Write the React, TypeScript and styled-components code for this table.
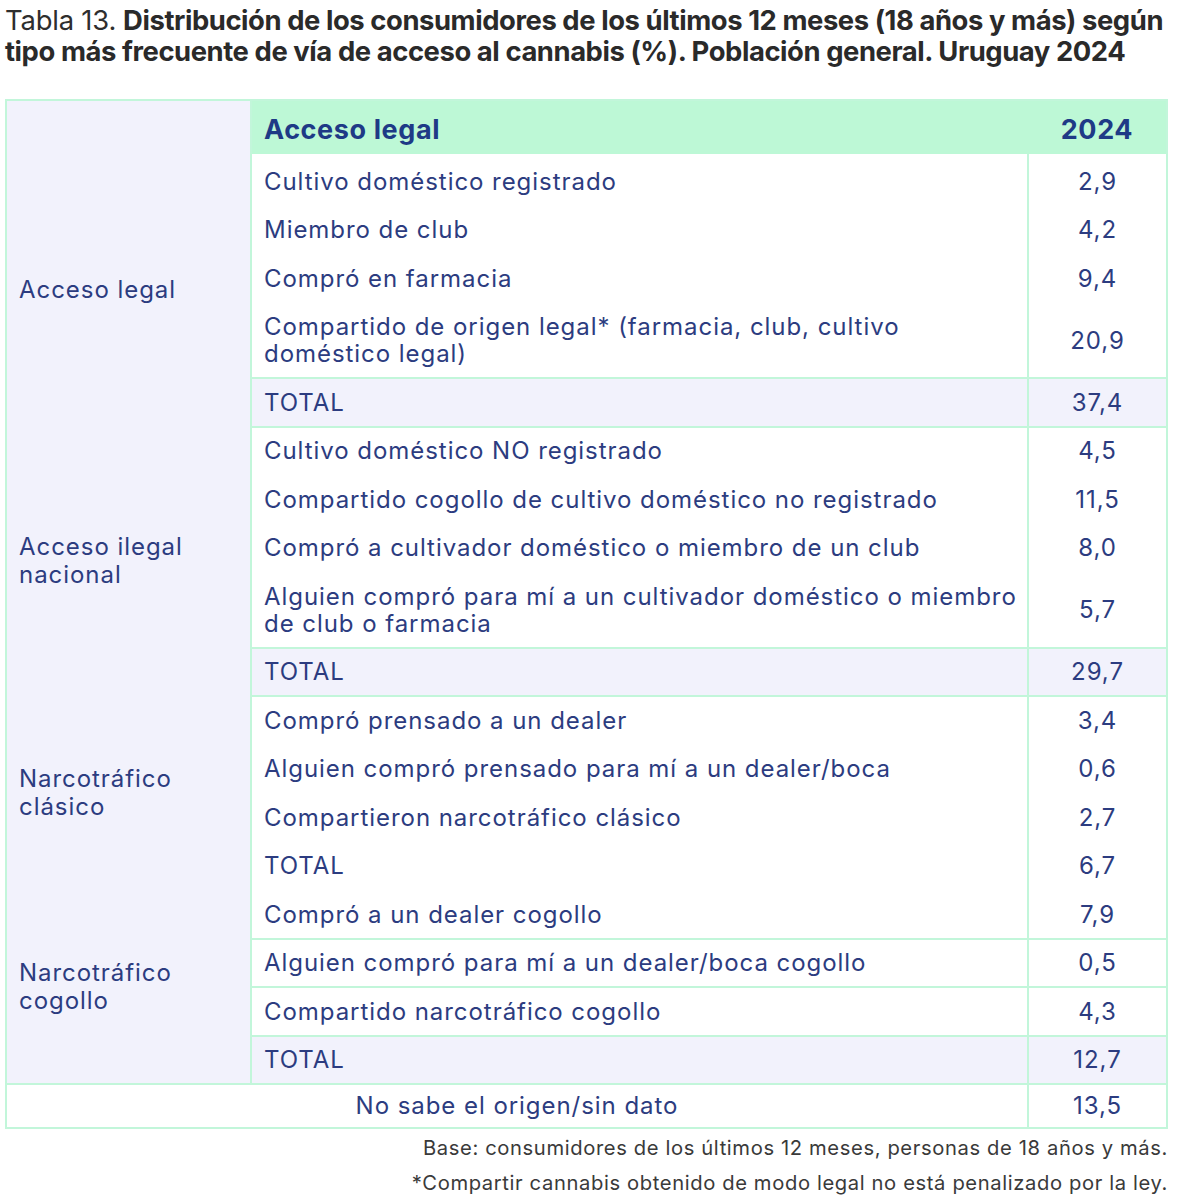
import React from "react";
import styled, { createGlobalStyle } from "styled-components";

const GlobalStyle = createGlobalStyle`
  html, body { margin: 0; padding: 0; background: #ffffff; }
  body { font-family: Inter, "Noto Sans", "DejaVu Sans", sans-serif; }
`;

const GREEN_LINE = "#c2f6da";
const HEADER_BG = "#bdf8d6";
const LAVENDER = "#f2f2fc";
const TEXT = "#2c3c80";
const HEAD_TEXT = "#1e3a86";

const PAD = 10.75;

const Page = styled.div`
  width: 1163px;
  margin-left: 5px;
  padding-top: 5px;
`;

const Title = styled.h1`
  margin: 0 0 32px 0;
  font-size: 27.4px;
  line-height: 31px;
  font-weight: 400;
  color: #2e2e2e;
`;

const TitleLead = styled.span`
  letter-spacing: -0.2px;
  margin-right: 7px;
`;

const TitleStrong = styled.strong`
  font-weight: 700;
  color: #2a2a2a;
  letter-spacing: -0.42px;
`;

const Table = styled.table`
  width: 100%;
  border-collapse: collapse;
  border: 2px solid ${GREEN_LINE};
  table-layout: fixed;
  color: ${TEXT};
  font-size: 24px;
  letter-spacing: 0.95px;
`;

const GroupCol = styled.col`
  width: 245px;
`;
const LabelCol = styled.col`
  width: 777px;
`;
const ValueCol = styled.col``;

const HeadBlank = styled.th`
  background: ${LAVENDER};
  border-right: 2px solid ${GREEN_LINE};
`;

const HeadCell = styled.th<{ $center?: boolean }>`
  background: ${HEADER_BG};
  color: ${HEAD_TEXT};
  font-weight: 700;
  font-size: 27px;
  letter-spacing: 0.6px;
  line-height: 30px;
  height: 54px;
  padding: ${(p) => (p.$center ? "5px 0 0 0" : "5px 4px 0 12px")};
  box-sizing: border-box;
  text-align: ${(p) => (p.$center ? "center" : "left")};
  vertical-align: middle;
`;

const GroupCell = styled.td<{ $lineBottom?: boolean }>`
  background: ${LAVENDER};
  border-right: 2px solid ${GREEN_LINE};
  border-bottom: ${(p) => (p.$lineBottom ? `2px solid ${GREEN_LINE}` : "none")};
  padding: 0 8px 0 12px;
  vertical-align: middle;
  white-space: pre-line;
  line-height: 28px;
`;

type CellProps = { $total?: boolean; $line?: boolean; $lineTop?: boolean; $first?: boolean };

const padTop = (p: CellProps) => PAD - (p.$lineTop ? 1 : 0) + (p.$first ? 3 : 0);
const padBottom = (p: CellProps) => PAD - (p.$line ? 1 : 0);

const LabelCell = styled.td<CellProps>`
  background: ${(p) => (p.$total ? LAVENDER : "#ffffff")};
  border-bottom: ${(p) => (p.$line ? `2px solid ${GREEN_LINE}` : "none")};
  padding-top: ${padTop}px;
  padding-bottom: ${padBottom}px;
  padding-left: 12px;
  padding-right: 2px;
  line-height: 27px;
  white-space: pre-line;
  vertical-align: middle;
`;

const ValueCell = styled.td<CellProps>`
  background: ${(p) => (p.$total ? LAVENDER : "#ffffff")};
  border-left: 2px solid ${GREEN_LINE};
  border-bottom: ${(p) => (p.$line ? `2px solid ${GREEN_LINE}` : "none")};
  padding-top: ${padTop}px;
  padding-bottom: ${padBottom}px;
  padding-left: 0;
  padding-right: 0;
  line-height: 27px;
  text-align: center;
  vertical-align: middle;
`;

const FooterLabel = styled.td`
  background: #ffffff;
  border-top: 2px solid ${GREEN_LINE};
  padding: 7px 14px 8px;
  line-height: 27px;
  text-align: center;
`;

const FooterValue = styled.td`
  background: #ffffff;
  border-left: 2px solid ${GREEN_LINE};
  border-top: 2px solid ${GREEN_LINE};
  padding: 7px 0 8px;
  line-height: 27px;
  text-align: center;
`;

const Notes = styled.div`
  margin-top: 1px;
  text-align: right;
  font-size: 20.2px;
  line-height: 35px;
  color: #3a3a3a;
  letter-spacing: 0.62px;
`;

type Row = { t: string; v: string; total?: boolean; line?: boolean };
type Group = { label: string; rows: Row[] };

const groups: Group[] = [
  {
    label: "Acceso legal",
    rows: [
      { t: "Cultivo doméstico registrado", v: "2,9" },
      { t: "Miembro de club", v: "4,2" },
      { t: "Compró en farmacia", v: "9,4" },
      {
        t: "Compartido de origen legal* (farmacia, club, cultivo\ndoméstico legal)",
        v: "20,9",
        line: true,
      },
      { t: "TOTAL", v: "37,4", total: true, line: true },
    ],
  },
  {
    label: "Acceso ilegal\nnacional",
    rows: [
      { t: "Cultivo doméstico NO registrado", v: "4,5" },
      { t: "Compartido cogollo de cultivo doméstico no registrado", v: "11,5" },
      { t: "Compró a cultivador doméstico o miembro de un club", v: "8,0" },
      {
        t: "Alguien compró para mí a un cultivador doméstico o miembro\nde club o farmacia",
        v: "5,7",
        line: true,
      },
      { t: "TOTAL", v: "29,7", total: true, line: true },
    ],
  },
  {
    label: "Narcotráfico\nclásico",
    rows: [
      { t: "Compró prensado a un dealer", v: "3,4" },
      { t: "Alguien compró prensado para mí a un dealer/boca", v: "0,6" },
      { t: "Compartieron narcotráfico clásico", v: "2,7" },
      { t: "TOTAL", v: "6,7" },
    ],
  },
  {
    label: "Narcotráfico\ncogollo",
    rows: [
      { t: "Compró a un dealer cogollo", v: "7,9", line: true },
      { t: "Alguien compró para mí a un dealer/boca cogollo", v: "0,5", line: true },
      { t: "Compartido narcotráfico cogollo", v: "4,3", line: true },
      { t: "TOTAL", v: "12,7", total: true, line: true },
    ],
  },
];

function lineAbove(gi: number, ri: number): boolean {
  if (ri > 0) return !!groups[gi].rows[ri - 1].line;
  if (gi > 0) {
    const prev = groups[gi - 1].rows;
    return !!prev[prev.length - 1].line;
  }
  return false;
}

export default function App() {
  return (
    <>
      <GlobalStyle />
      <Page>
        <Title>
          <TitleLead>Tabla 13.</TitleLead>
          <TitleStrong>
            Distribución de los consumidores de los últimos 12 meses (18 años y más) según
            tipo más frecuente de vía de acceso al cannabis (%). Población general. Uruguay 2024
          </TitleStrong>
        </Title>
        <Table>
          <colgroup>
            <GroupCol />
            <LabelCol />
            <ValueCol />
          </colgroup>
          <thead>
            <tr>
              <HeadBlank />
              <HeadCell>Acceso legal</HeadCell>
              <HeadCell $center>2024</HeadCell>
            </tr>
          </thead>
          <tbody>
            {groups.map((g, gi) =>
              g.rows.map((r, ri) => {
                const top = lineAbove(gi, ri);
                const first = gi === 0 && ri === 0;
                return (
                  <tr key={`${gi}-${ri}`}>
                    {ri === 0 && (
                      <GroupCell rowSpan={g.rows.length} $lineBottom={gi === groups.length - 1}>
                        {g.label}
                      </GroupCell>
                    )}
                    <LabelCell $total={r.total} $line={r.line} $lineTop={top} $first={first}>
                      {r.t}
                    </LabelCell>
                    <ValueCell $total={r.total} $line={r.line} $lineTop={top} $first={first}>
                      {r.v}
                    </ValueCell>
                  </tr>
                );
              })
            )}
            <tr>
              <FooterLabel colSpan={2}>No sabe el origen/sin dato</FooterLabel>
              <FooterValue>13,5</FooterValue>
            </tr>
          </tbody>
        </Table>
        <Notes>
          Base: consumidores de los últimos 12 meses, personas de 18 años y más.
          <br />
          *Compartir cannabis obtenido de modo legal no está penalizado por la ley.
        </Notes>
      </Page>
    </>
  );
}
